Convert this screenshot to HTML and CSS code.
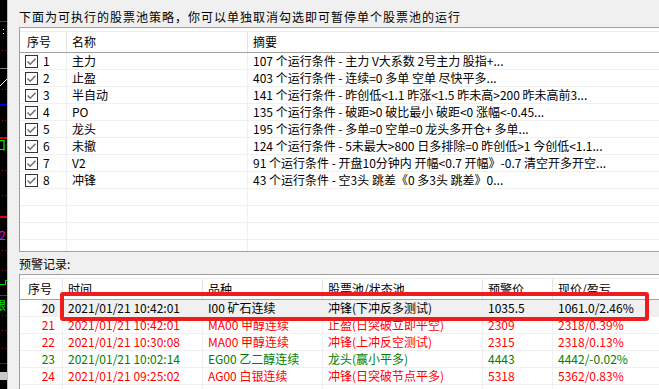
FILE: index.html
```html
<!DOCTYPE html>
<html>
  <head>
    <meta charset="utf-8">
    <link rel="stylesheet" href="styles.css">
  </head>

  <body>
    <div class="page">
      <div class="chart_strip">
        <svg width="7" height="389" viewBox="0 0 7 389">
          <rect x="0" y="21" width="7" height="1" fill="#e00000"/>
          <rect x="3" y="29" width="1" height="1" fill="#fff"/>
          <rect x="3" y="33" width="1" height="1" fill="#fff"/>
          <rect x="2" y="50" width="1" height="1" fill="#c00000"/>
          <rect x="5" y="50" width="1" height="1" fill="#c00000"/>
          <rect x="0" y="68" width="7" height="1" fill="#808080"/>
          <line x1="0" y1="86" x2="7" y2="79" stroke="#fff" stroke-width="1"/>
          <rect x="2" y="89" width="1" height="1" fill="#c00000"/>
          <rect x="5" y="89" width="1" height="1" fill="#c00000"/>
          <rect x="0" y="104" width="7" height="1" fill="#0000ff"/>
          <rect x="2" y="120" width="1" height="1" fill="#c00000"/>
          <rect x="5" y="120" width="1" height="1" fill="#c00000"/>
          <rect x="0" y="137" width="7" height="2" fill="#e00000"/>
          <text x="-6" y="150" fill="#00ff00" font-size="12">口:</text>
          <rect x="2" y="170" width="1" height="1" fill="#c00000"/>
          <rect x="5" y="170" width="1" height="1" fill="#c00000"/>
          <rect x="2" y="195" width="1" height="1" fill="#c00000"/>
          <rect x="5" y="195" width="1" height="1" fill="#c00000"/>
          <rect x="0" y="216" width="7" height="2" fill="#e00000"/>
          <text x="-1" y="240" fill="#ff00ff" font-size="12">2</text>
          <rect x="2" y="250" width="1" height="1" fill="#c00000"/>
          <rect x="5" y="250" width="1" height="1" fill="#c00000"/>
          <rect x="2" y="270" width="1" height="1" fill="#c00000"/>
          <rect x="5" y="270" width="1" height="1" fill="#c00000"/>
          <path d="M0 284.5 H5.5 V280.5 H7" stroke="#00e000" fill="none"/>
          <rect x="0" y="295" width="7" height="1" fill="#e00000"/>
          <text x="-6" y="310" fill="#00e000" font-size="12">跟</text>
          <rect x="2" y="315" width="1" height="1" fill="#c00000"/>
          <rect x="5" y="315" width="1" height="1" fill="#c00000"/>
          <rect x="2" y="330" width="1" height="1" fill="#c00000"/>
          <rect x="5" y="330" width="1" height="1" fill="#c00000"/>
          <rect x="2" y="348" width="1" height="1" fill="#c00000"/>
          <rect x="5" y="348" width="1" height="1" fill="#c00000"/>
          <rect x="0" y="363" width="7" height="1" fill="#800080"/>
          <rect x="0" y="372" width="7" height="8" fill="#c8c8c8"/>
        </svg>
      </div>

      <div class="main">
        <div class="caption caption_top">下面为可执行的股票池策略，你可以单独取消勾选即可暂停单个股票池的运行</div>

        <div class="listbox pool_list">
          <div class="head pool_cols">
            <div class="cell first">序号</div>
            <div class="cell">名称</div>
            <div class="cell">摘要</div>
          </div>
          <div class="row pool_cols">
            <div class="cell first"><span class="check"><svg width="11" height="11" viewBox="0 0 11 11"><path d="M1.5 5.5 L4.2 8.2 L9.5 2.8" /></svg></span>1</div>
            <div class="cell">主力</div>
            <div class="cell">107 个运行条件 - 主力 V大系数 2号主力 股指+...</div>
          </div>
          <div class="row pool_cols">
            <div class="cell first"><span class="check"><svg width="11" height="11" viewBox="0 0 11 11"><path d="M1.5 5.5 L4.2 8.2 L9.5 2.8" /></svg></span>2</div>
            <div class="cell">止盈</div>
            <div class="cell">403 个运行条件 - 连续=0 多单 空单 尽快平多...</div>
          </div>
          <div class="row pool_cols">
            <div class="cell first"><span class="check"><svg width="11" height="11" viewBox="0 0 11 11"><path d="M1.5 5.5 L4.2 8.2 L9.5 2.8" /></svg></span>3</div>
            <div class="cell">半自动</div>
            <div class="cell">141 个运行条件 - 昨创低&lt;1.1 昨涨&lt;1.5 昨未高&gt;200 昨未高前3...</div>
          </div>
          <div class="row pool_cols">
            <div class="cell first"><span class="check"><svg width="11" height="11" viewBox="0 0 11 11"><path d="M1.5 5.5 L4.2 8.2 L9.5 2.8" /></svg></span>4</div>
            <div class="cell">PO</div>
            <div class="cell">135 个运行条件 - 破距&gt;0 破比最小 破距&lt;0 涨幅&lt;-0.45...</div>
          </div>
          <div class="row pool_cols">
            <div class="cell first"><span class="check"><svg width="11" height="11" viewBox="0 0 11 11"><path d="M1.5 5.5 L4.2 8.2 L9.5 2.8" /></svg></span>5</div>
            <div class="cell">龙头</div>
            <div class="cell">195 个运行条件 - 多单=0 空单=0 龙头多开仓+ 多单...</div>
          </div>
          <div class="row pool_cols">
            <div class="cell first"><span class="check"><svg width="11" height="11" viewBox="0 0 11 11"><path d="M1.5 5.5 L4.2 8.2 L9.5 2.8" /></svg></span>6</div>
            <div class="cell">未撤</div>
            <div class="cell">124 个运行条件 - 5未最大&gt;800 日多排除=0 昨创低&gt;1 今创低&lt;1.1...</div>
          </div>
          <div class="row pool_cols">
            <div class="cell first"><span class="check"><svg width="11" height="11" viewBox="0 0 11 11"><path d="M1.5 5.5 L4.2 8.2 L9.5 2.8" /></svg></span>7</div>
            <div class="cell">V2</div>
            <div class="cell">91 个运行条件 - 开盘10分钟内 开幅&lt;0.7 开幅》-0.7 清空开多开空...</div>
          </div>
          <div class="row pool_cols">
            <div class="cell first"><span class="check"><svg width="11" height="11" viewBox="0 0 11 11"><path d="M1.5 5.5 L4.2 8.2 L9.5 2.8" /></svg></span>8</div>
            <div class="cell">冲锋</div>
            <div class="cell">43 个运行条件 - 空3头 跳差《0 多3头 跳差》0...</div>
          </div>
          <div class="row pool_cols"><div class="cell"></div><div class="cell"></div><div class="cell"></div></div>
          <div class="row pool_cols"><div class="cell"></div><div class="cell"></div><div class="cell"></div></div>
          <div class="row pool_cols"><div class="cell"></div><div class="cell"></div><div class="cell"></div></div>
          <div class="row pool_cols"><div class="cell"></div><div class="cell"></div><div class="cell"></div></div>
        </div>

        <div class="caption caption_alert">预警记录:</div>

        <div class="listbox alert_list">
          <div class="head alert_cols">
            <div class="cell first">序号</div>
            <div class="cell">时间</div>
            <div class="cell">品种</div>
            <div class="cell">股票池/状态池</div>
            <div class="cell">预警价</div>
            <div class="cell">现价/盈亏</div>
          </div>
          <div class="row alert_cols selected">
            <div class="cell num">20</div>
            <div class="cell">2021/01/21 10:42:01</div>
            <div class="cell">I00 矿石连续</div>
            <div class="cell">冲锋(下冲反多测试)</div>
            <div class="cell">1035.5</div>
            <div class="cell">1061.0/2.46%</div>
          </div>
          <div class="row alert_cols red">
            <div class="cell num">21</div>
            <div class="cell">2021/01/21 10:42:01</div>
            <div class="cell">MA00 甲醇连续</div>
            <div class="cell">止盈(日突破立即平空)</div>
            <div class="cell">2309</div>
            <div class="cell">2318/0.39%</div>
          </div>
          <div class="row alert_cols red">
            <div class="cell num">22</div>
            <div class="cell">2021/01/21 10:30:08</div>
            <div class="cell">MA00 甲醇连续</div>
            <div class="cell">冲锋(上冲反空测试)</div>
            <div class="cell">2315</div>
            <div class="cell">2318/0.13%</div>
          </div>
          <div class="row alert_cols green">
            <div class="cell num">23</div>
            <div class="cell">2021/01/21 10:02:14</div>
            <div class="cell">EG00 乙二醇连续</div>
            <div class="cell">龙头(赢小平多)</div>
            <div class="cell">4443</div>
            <div class="cell">4442/-0.02%</div>
          </div>
          <div class="row alert_cols red">
            <div class="cell num">24</div>
            <div class="cell">2021/01/21 09:25:02</div>
            <div class="cell">AG00 白银连续</div>
            <div class="cell">冲锋(日突破节点平多)</div>
            <div class="cell">5318</div>
            <div class="cell">5362/0.83%</div>
          </div>
          <div class="row alert_cols"><div class="cell"></div><div class="cell"></div><div class="cell"></div><div class="cell"></div><div class="cell"></div><div class="cell"></div></div>

          <div class="mark"></div>
        </div>
      </div>
    </div>
  </body>
</html>
```

FILE: styles.css
```css
body{
  margin: 0;
  background: #f0f0f0;
  font-family: "Noto Sans CJK SC", "Noto Sans", sans-serif;
  font-size: 12px;
  color: #000;
  overflow: hidden;
}
.page{
  display: flex;
  width: 659px;
  height: 389px;
  overflow: hidden;
}
.chart_strip{
  flex: none;
  width: 7px;
  background: #000;
  border-right: 1px solid #bdbdbd;
}
.chart_strip svg{
  display: block;
}
.main{
  flex: 1;
  min-width: 0;
  padding-left: 11px;
}
.caption{
  box-sizing: border-box;
  height: 27px;
  padding-top: 9px;
  line-height: 16px;
  white-space: nowrap;
}
.caption_top{
  letter-spacing: 1px;
}
.caption_alert{
  height: 22px;
  padding-top: 4px;
}

/* list views */
.listbox{
  position: relative;
  box-sizing: border-box;
  width: 680px;
  padding-top: 3px;
  border: 1px solid #a0a0a0;
  background: #fff;
  overflow: hidden;
}
.pool_list{
  height: 225px;
}
.alert_list{
  height: 130px;
}
.pool_cols{
  display: grid;
  grid-template-columns: 47px 181px 1fr;
}
.alert_cols{
  display: grid;
  grid-template-columns: 43px 140px 120px 160px 70px 1fr;
}
.head{
  border-top: 1px solid #ececec;
  border-bottom: 1px solid #a0a0a0;
}
.head .cell{
  height: 20px;
  line-height: 20px;
  border-right: 1px solid #e5e5e5;
}
.row{
  box-sizing: border-box;
  height: 17px;
  border-bottom: 1px solid #f0f0f0;
}
.row .cell{
  line-height: 16px;
  border-right: 1px solid #f0f0f0;
}
.cell{
  box-sizing: border-box;
  padding-left: 5px;
  white-space: nowrap;
  overflow: hidden;
}
.pool_list .head .first{
  padding-left: 7px;
}
.alert_list .head .first{
  padding-left: 8px;
}
.row .first{
  display: flex;
  align-items: center;
}
.check{
  box-sizing: border-box;
  display: inline-flex;
  align-items: center;
  justify-content: center;
  width: 13px;
  height: 13px;
  margin-right: 5px;
  border: 1px solid #333;
  background: #fff;
}
.check svg{
  display: block;
}
.check path{
  fill: none;
  stroke: #6e6e6e;
  stroke-width: 1.5;
}
.num{
  text-align: right;
  padding-right: 7px;
}
.selected{
  background: linear-gradient(to right, #fff 22px, #f0f0f0 22px);
}
.red{
  color: #ff0000;
}
.green{
  color: #008000;
}
.mark{
  position: absolute;
  left: 40px;
  top: 17px;
  box-sizing: border-box;
  width: 589px;
  height: 29px;
  border: 4px solid #ee1c1c;
  border-radius: 3px;
}
```
